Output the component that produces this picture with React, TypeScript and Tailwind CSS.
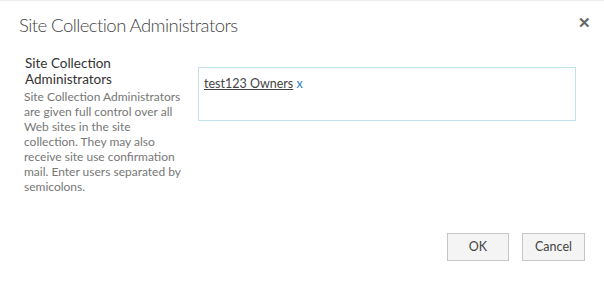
export default function App() {
  const font = { fontFamily: 'Lato, "Open Sans", Arial, sans-serif' };
  return (
    <div className="w-[604px] h-[306px] bg-white border-t border-[#ededed] flex flex-col" style={font}>
      <div className="flex items-start justify-between pl-[19px] pr-[13px] pt-[10px]">
        <h1 className="text-[18.5px] leading-[28px] font-light tracking-[-0.55px] text-[#444]">Site Collection Administrators</h1>
        <span className="mt-[1px] text-[#666] text-[15px] font-bold leading-[20px]">✕</span>
      </div>
      <div className="flex pl-[24px] pt-[16px]">
        <div className="w-[160px] shrink-0">
          <div className="text-[13.5px] leading-[16px] text-[#333] pl-[1px]">Site Collection<br />Administrators</div>
          <p className="text-[12px] leading-[15px] text-[#777] mt-[2px]">
            Site Collection Administrators are given full control over all Web sites in the site collection. They may also receive site use confirmation mail. Enter users separated by semicolons.
          </p>
        </div>
        <div className="ml-[14px] mt-[12px] w-[378px] h-[54px] border border-[#bfe3e8] px-[5px] pt-[2px]">
          <span className="text-[12.5px] text-[#444] underline">test123 Owners</span>
          <span className="text-[12.5px] text-[#2a7fc4]"> x</span>
        </div>
      </div>
      <div className="flex justify-end gap-[13px] pr-[19px] mt-[39px]">
        <button className="w-[62px] h-[28px] bg-[#f4f4f4] border border-[#c6c6c6] text-[12.5px] text-[#444]">OK</button>
        <button className="w-[63px] h-[28px] bg-[#f4f4f4] border border-[#c6c6c6] text-[12.5px] text-[#444]">Cancel</button>
      </div>
    </div>
  );
}
